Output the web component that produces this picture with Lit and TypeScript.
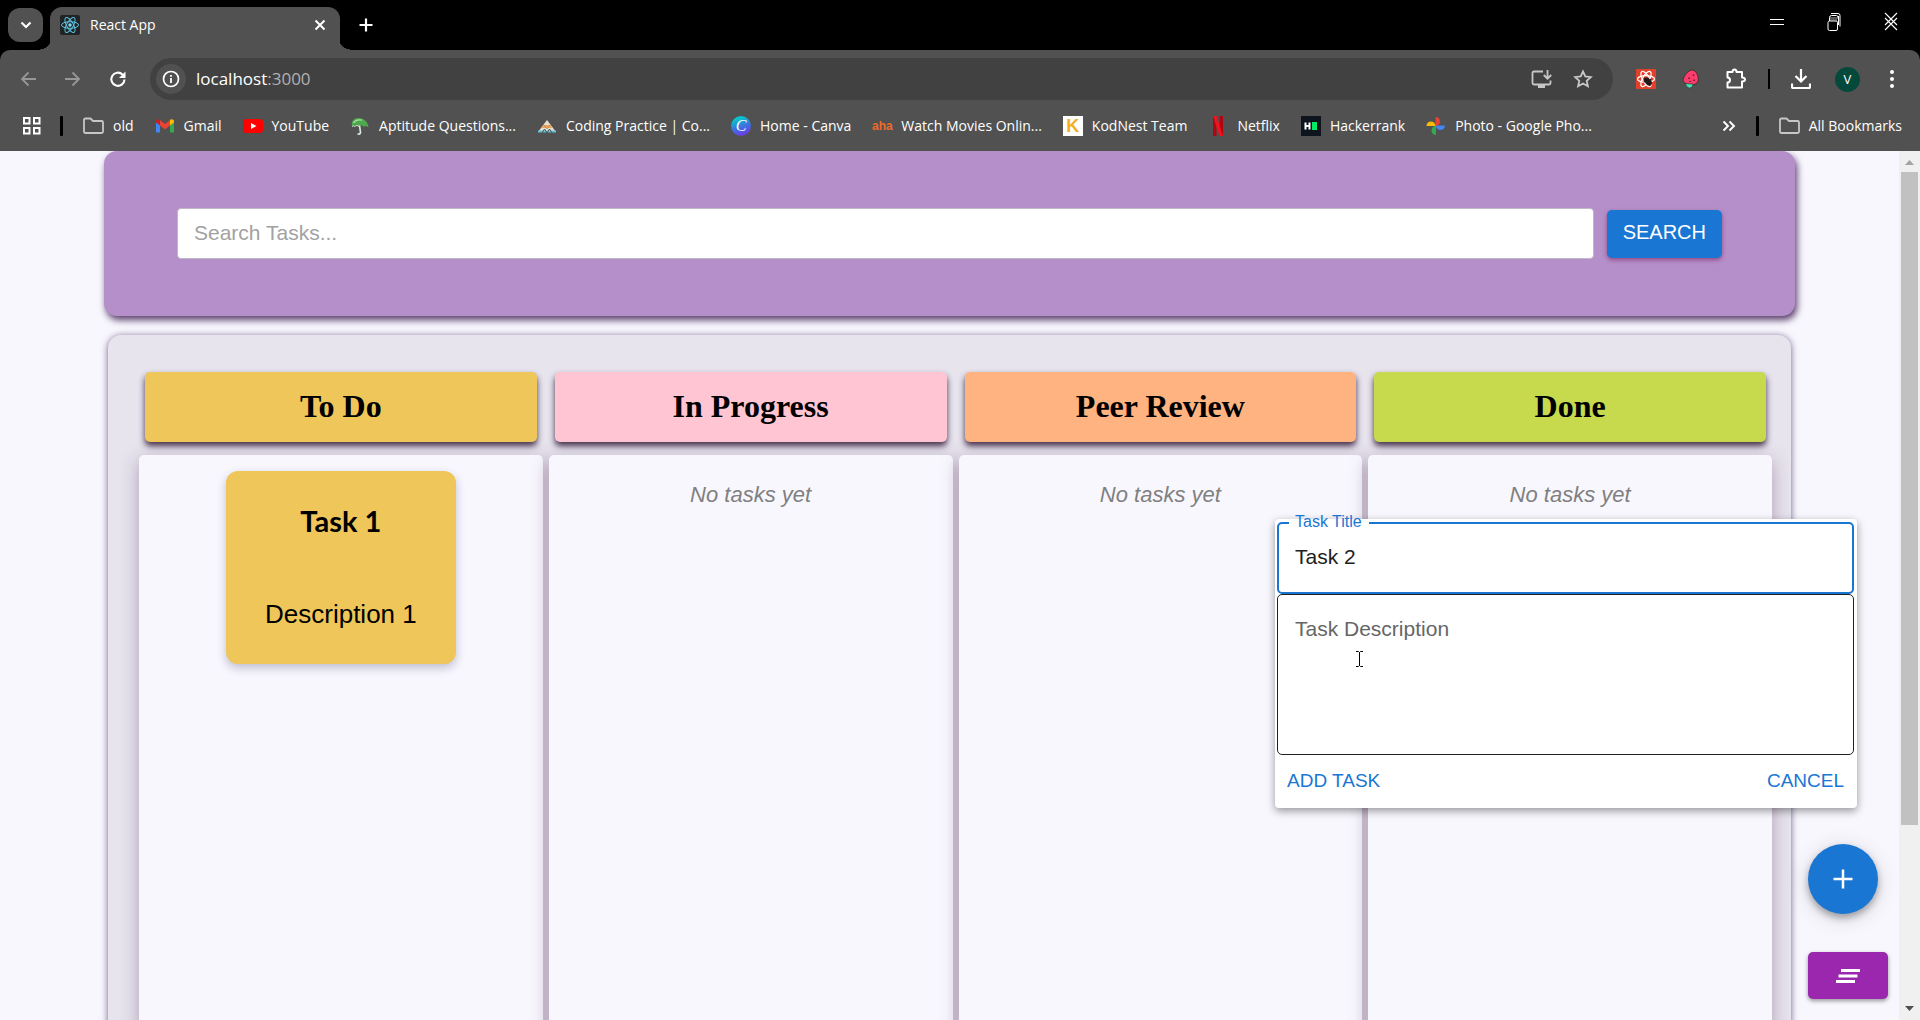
import { LitElement, html, css, svg, TemplateResult } from "lit";
import { customElement, property, state } from "lit/decorators.js";

const icon = (name: string, w: number, h: number, body: TemplateResult, box = `0 0 ${w} ${h}`) =>
  html`<svg class=${name} width=${w} height=${h} viewBox=${box} aria-hidden="true">${body}</svg>`;

const folderIcon = icon("ic", 21, 20, svg`<path d="M1 4q0-1.500 1.500-1.500h5l2.500 2.500h8.500q1.500 0 1.500 1.500v9q0 1.500-1.500 1.500h-16q-1.500 0-1.500-1.500z" fill="none" stroke="#c7c7c7" stroke-width="1.800"/>`);

const bookmarkIcons: Record<string, TemplateResult> = {
  folder: folderIcon,
  gmail: icon("ic", 20, 20, svg`
    <path d="M1 6v10.500h4V9z" fill="#4285f4"/><path d="M15 9v7.500h4V6z" fill="#34a853"/>
    <path d="M1 5.500C1 3.200 3.500 2.500 5 3.800V9.500L1 6.500z" fill="#c5221f"/>
    <path d="M5 4l5 4 5-4v5.500l-5 4-5-4z" fill="#ea4335"/>
    <path d="M15 3.800c1.500-1.300 4-.6 4 1.700v1l-4 3z" fill="#fbbc04"/>`),
  youtube: icon("ic", 20, 20, svg`<rect y="3" width="20" height="14" rx="3.500" fill="#f00"/><path d="M8 7l5.500 3L8 13z" fill="#fff"/>`),
  umbrella: icon("ic", 20, 20, svg`
    <path d="M2 10C1 5 4 2 8.500 2 13.500 2 18 5.500 18.500 11.500c-1.500-1.800-3-2-4.500-.8C12.500 9.500 10.500 9 9 10.300 7.500 8.300 5.500 8.500 4.500 10 3.500 9.300 2.800 9.400 2 10z" fill="#4fa84c"/>
    <path d="M3.500 7C5 4.500 8 3.300 12 4.200" fill="none" stroke="#a4e29f" stroke-width="1.300"/>
    <path d="M2 10.500q1.500-1.500 2.500 0 2.500-2.500 4.500 0" fill="none" stroke="#d5ecd3" stroke-width="1"/>
    <path d="M9.500 9.500l1 6.800q-.3 2.500-3 1.400" fill="none" stroke="#d9e6dc" stroke-width="1.700"/>`),
  ninjas: icon("ic", 20, 20, svg`
    <path d="M10 4l9 12H1z" fill="#e6e0cf"/><path d="M6.500 9h7l2 3H4.300z" fill="#f0a35a"/>
    <path d="M1 14.500h18v2H1z" fill="#63c3d8"/><path d="M5 17l2.500-4 2.500 4 2.500-4 2.500 4" stroke="#515151" stroke-width="1" fill="none"/>
    <path d="M7 9l3 4 3-4" stroke="#8a8071" stroke-width=".6" fill="none"/>`),
  canva: html`<span class="ic badge canva">C</span>`,
  aha: html`<span class="ic badge aha">aha</span>`,
  kod: html`<span class="ic badge kod">K</span>`,
  netflix: icon("ic", 20, 20, svg`<path d="M5 0h3.500v20H5z" fill="#b1060f"/><path d="M11.500 0H15v20h-3.500z" fill="#b1060f"/><path d="M5 0h3.500L15 20h-3.500z" fill="#f0121d"/>`),
  hacker: icon("ic", 20, 20, svg`<rect width="20" height="20" fill="#0e141e"/><path d="M4.500 6.500v7M8.500 6.500v7M4.500 10h4" stroke="#fff" stroke-width="2" fill="none"/><rect x="11" y="6" width="5" height="8" fill="#00ea64"/>`),
  photos: icon("ic", 20, 20, svg`
    <path d="M9.500 10V1a4.500 4.500 0 0 1 0 9z" fill="#ea4335"/><path d="M10 9.500h9a4.500 4.500 0 0 1-9 0z" fill="#4285f4"/>
    <path d="M10 10v9a4.500 4.500 0 0 1 0-9z" fill="#34a853"/><path d="M9.500 10h-9a4.500 4.500 0 0 1 9 0z" fill="#fbbc04"/>`),
};

const bookmarks = [
  ["folder", "old"],
  ["gmail", "Gmail"],
  ["youtube", "YouTube"],
  ["umbrella", "Aptitude Questions..."],
  ["ninjas", "Coding Practice | Co..."],
  ["canva", "Home - Canva"],
  ["aha", "Watch Movies Onlin..."],
  ["kod", "KodNest Team"],
  ["netflix", "Netflix"],
  ["hacker", "Hackerrank"],
  ["photos", "Photo - Google Pho..."],
];

@customElement("browser-chrome")
class BrowserChrome extends LitElement {
  static styles = css`
    :host { display: block; background: #000; color: #fff; font: 14px/20px "Open Sans", "Noto Sans", sans-serif; }
    * { box-sizing: border-box; }
    button { background: none; border: 0; padding: 0; margin: 0; color: inherit; font: inherit; display: flex; align-items: center; justify-content: center; }
    a { color: inherit; text-decoration: none; }
    svg { display: block; flex: none; }
    .strip { display: flex; height: 50px; padding: 7px 20px 0 8px; }
    .tab-search { width: 35px; height: 34px; margin: 1px 7px 0 0; border-radius: 12px; background: #515151; }
    .tab { position: relative; display: flex; align-items: center; width: 290px; height: 43px; padding: 0 12px 7px 10px; background: #515151; border-radius: 12px 12px 0 0; }
    .tab::before, .tab::after { content: ""; position: absolute; bottom: 0; width: 14px; height: 8px; }
    .tab::before { right: 100%; background: radial-gradient(ellipse 14px 8px at 0 0, transparent 98%, #515151 100%); }
    .tab::after { left: 100%; background: radial-gradient(ellipse 14px 8px at 100% 0, transparent 98%, #515151 100%); }
    .tab-title { flex: 1; padding-left: 10px; }
    .close { width: 16px; height: 20px; }
    .new { width: 20px; height: 36px; margin-left: 16px; }
    .controls { margin-left: auto; display: flex; gap: 39px; height: 30px; }
    .controls button { width: 18px; }
    .toolbar { display: flex; align-items: center; height: 50px; padding: 8px 22px 0 19px; background: #515151; border-radius: 10px 10px 0 0; }
    .nav { display: flex; gap: 27px; width: 131px; height: 42px; }
    .nav button { width: 18px; }
    .omni { flex: 1; display: flex; align-items: center; height: 42px; padding: 0 20px 0 6px; background: #414141; border-radius: 21px; }
    .info { width: 30px; height: 30px; border-radius: 15px; background: #515151; }
    .url { flex: 1; min-width: 0; padding: 0 10px; font-size: 17px; line-height: 24px; }
    .port { color: #b0b0b0; }
    .omni-tools { display: flex; gap: 20px; }
    .tools { display: flex; align-items: center; margin-left: 22px; }
    .tools button { width: 22px; height: 30px; margin-right: 23px; }
    .sep { width: 2px; height: 20px; margin: 0 20px 0 -2px; background: #000; }
    .tools .avatar { width: 25px; height: 25px; margin-right: 21px; border-radius: 50%; background: #04493c; font-size: 13px; }
    .tools .menu { width: 6px; margin: 0 3px 0 8px; }
    .marks { display: flex; align-items: center; height: 51px; padding: 0 18px 0 23px; background: #515151; }
    .marks .bar { width: 3px; height: 20px; background: #000; margin: 0 20px 0 19px; border-radius: 1px; }
    .links { flex: 1; display: flex; gap: 21px; min-width: 0; overflow: hidden; }
    .mark { display: flex; align-items: center; gap: 9px; white-space: nowrap; }
    .more { width: 16px; height: 20px; }
    .badge { display: flex; align-items: center; justify-content: center; width: 20px; height: 20px; }
    .canva { border-radius: 50%; background: linear-gradient(160deg, #08c3cc 20%, #3f6fe0 55%, #7d2ae8); font: italic 16px/20px "Liberation Serif", serif; }
    .aha { color: #f26a2a; font: bold 12px/20px "Liberation Sans", sans-serif; }
    .kod { background: #fff; color: #f2b01e; font: bold 18px/20px "Liberation Sans", sans-serif; }
  `;

  render() {
    return html`
      <div class="strip">
        <button class="tab-search" aria-label="Search tabs">${icon("i", 12, 8, svg`<path d="M1.500 1.500L6 6l4.500-4.500" fill="none" stroke="#fff" stroke-width="2.200"/>`)}</button>
        <div class="tab">
          ${icon("fav", 20, 20, svg`<rect width="20" height="20" rx="2" fill="#212427"/>
            <g fill="none" stroke="#5bc4e0" stroke-width="1"><ellipse cx="10" cy="10" rx="8.500" ry="3.300"/>
            <ellipse cx="10" cy="10" rx="8.500" ry="3.300" transform="rotate(60 10 10)"/>
            <ellipse cx="10" cy="10" rx="8.500" ry="3.300" transform="rotate(120 10 10)"/></g><circle cx="10" cy="10" r="1.700" fill="#7fdcf5"/>`)}
          <span class="tab-title">React App</span>
          <button class="close" aria-label="Close tab">${icon("i", 12, 12, svg`<path d="M1.500 1.500l9 9m0-9l-9 9" stroke="#fff" stroke-width="2"/>`)}</button>
        </div>
        <button class="new" aria-label="New tab">${icon("i", 14, 14, svg`<path d="M7 .5v13M.5 7h13" stroke="#fff" stroke-width="2.200"/>`)}</button>
        <div class="controls">
          <button aria-label="Minimize">${icon("i", 14, 14, svg`<path d="M0 4.500h14M0 9.500h14" stroke="#fff" stroke-width="1.200"/>`)}</button>
          <button aria-label="Restore">${icon("i", 14, 20, svg`<g fill="none" stroke="#fff"><path d="M4 1.500h7q2 0 2 2V14.500M11.500 4v9"/><path d="M2.500 9V5.500q0-2 2-2h5q1.500 0 1.500 2"/><rect x="1" y="9" width="9.500" height="9.500" rx="1.500"/><path d="M3 6h8M3 8h7" stroke="#aaa"/></g>`)}</button>
          <button aria-label="Close">${icon("i", 14, 20, svg`<path d="M1 1l12 12M13 1L1 13M1 6l12 12M13 6L1 18" stroke="#fff" stroke-width="1.100"/>`)}</button>
        </div>
      </div>
      <div class="toolbar">
        <div class="nav">
          <button aria-label="Back">${icon("i", 16, 16, svg`<path d="M8.500 1.500L2 8l6.500 6.500M2 8h14" fill="none" stroke="#979797" stroke-width="1.800"/>`)}</button>
          <button aria-label="Forward">${icon("i", 16, 16, svg`<path d="M7.500 1.500L14 8l-6.500 6.500M14 8H0" fill="none" stroke="#979797" stroke-width="1.800"/>`)}</button>
          <button aria-label="Reload">${icon("i", 18, 18, svg`<path d="M15.500 9.500A6.600 6.600 0 1 1 13.500 4.500L15.500 6.500" fill="none" stroke="#fff" stroke-width="2.100"/><path d="M16.500 1.500V8H10z" fill="#fff"/>`)}</button>
        </div>
        <div class="omni">
          <button class="info" aria-label="Site information">${icon("i", 18, 18, svg`<circle cx="9" cy="9" r="7.500" fill="none" stroke="#fff" stroke-width="1.700"/><path d="M9 8v5M9 5v1.800" stroke="#fff" stroke-width="1.800"/>`)}</button>
          <span class="url" role="textbox" aria-label="Address">localhost<span class="port">:3000</span></span>
          <div class="omni-tools">
            <button aria-label="Install app">${icon("i", 22, 20, svg`<g fill="none" stroke="#c7c7c7" stroke-width="1.800"><path d="M12 2.500H3Q1.500 2.500 1.500 4v10q0 1.500 1.500 1.500h15q1.500 0 1.500-1.500v-2.500"/><path d="M16.500 1v8.500M12.800 6l3.700 3.700L20.200 6"/></g><path d="M7 16h7v3H7z" fill="#c7c7c7"/>`)}</button>
            <button aria-label="Bookmark this tab">${icon("i", 20, 20, svg`<path d="M10 2.500l2.300 5 5.500.6-4.100 3.700 1.200 5.500L10 14.500l-4.900 2.800 1.200-5.500L2.200 8.100l5.500-.6z" fill="none" stroke="#c7c7c7" stroke-width="1.800"/>`)}</button>
          </div>
        </div>
        <div class="tools">
          <button aria-label="React Developer Tools">${icon("i", 20, 20, svg`<rect width="20" height="20" rx="1" fill="#e2402b"/>
            <g fill="none" stroke="#fff" stroke-width="1.200"><ellipse cx="10" cy="10" rx="8.500" ry="3.400"/><ellipse cx="10" cy="10" rx="8.500" ry="3.400" transform="rotate(60 10 10)"/><ellipse cx="10" cy="10" rx="8.500" ry="3.400" transform="rotate(120 10 10)"/></g>
            <ellipse cx="12" cy="12.500" rx="4.500" ry="3" transform="rotate(45 12 12.500)" fill="#24171a"/><path d="M9 8.500l-1 5M8 10.500l5-1M11 16l4-6M13.500 17l1.500-3" stroke="#24171a" stroke-width="1.200"/>`)}</button>
          <button aria-label="Strawberry extension">${icon("i", 18, 20, svg`<path d="M10.500 1C14 1.500 16.500 6.500 16.300 10.500 16 14.500 13 16 8.500 15.500 4 15.300.8 13.500 1.200 10.500 2 6.500 6.500.8 10.500 1z" fill="#fb3d6c" stroke="#2b2b2b" stroke-width=".8"/><path d="M7 8.500v1.500M11.500 5.500v1.500M12 10.500v1.500M8 12v1" stroke="#5a1730" stroke-width="1.400"/><path d="M3.500 14.500l4 .5 3.500 0-.5 2.500-3 1.700L4.500 17.500z" fill="#4fe0b0" stroke="#233" stroke-width=".6"/>`)}</button>
          <button aria-label="Extensions">${icon("i", 22, 22, svg`<path d="M2.500 4h5q0-2.500 2-2.500t2 2.500h5.500v5.500q3 0 3 2t-3 2v6H2.500v-5q2.500 0 2.500-2.500T2.500 9.500z" fill="none" stroke="#fff" stroke-width="2" stroke-linejoin="round"/>`)}</button>
          <span class="sep"></span>
          <button aria-label="Downloads">${icon("i", 20, 20, svg`<path d="M10 0v12M4.500 7l5.500 5.500L15.500 7M1 14.500v3.500q0 1 1 1h16q1 0 1-1v-3.500" fill="none" stroke="#fff" stroke-width="2.200"/>`)}</button>
          <button class="avatar" aria-label="Profile">V</button>
          <button class="menu" aria-label="Menu">${icon("i", 4, 18, svg`<g fill="#fff"><circle cx="2" cy="2" r="2"/><circle cx="2" cy="9" r="2"/><circle cx="2" cy="16" r="2"/></g>`)}</button>
        </div>
      </div>
      <nav class="marks" aria-label="Bookmarks">
        <button aria-label="Apps">${icon("i", 18, 18, svg`<g fill="none" stroke="#fff" stroke-width="2"><rect x="1" y="1" width="5.500" height="5.500"/><rect x="11" y="1" width="5.500" height="5.500"/><rect x="1" y="11" width="5.500" height="5.500"/><rect x="11" y="11" width="5.500" height="5.500"/></g>`)}</button>
        <span class="bar"></span>
        <div class="links">
          ${bookmarks.map(([kind, text]) => html`<a class="mark" href="#">${bookmarkIcons[kind]}<span>${text}</span></a>`)}
        </div>
        <button class="more" aria-label="More bookmarks">${icon("i", 14, 12, svg`<path d="M1.500 1.500L6 6l-4.500 4.500M7.500 1.500L12 6l-4.500 4.500" fill="none" stroke="#fff" stroke-width="1.900"/>`)}</button>
        <span class="bar"></span>
        <a class="mark" href="#">${folderIcon}<span>All Bookmarks</span></a>
      </nav>
    `;
  }
}

interface Task { title: string; description: string; }
interface Lane { name: string; tone: string; tasks: Task[]; }

@customElement("task-lane")
class TaskLane extends LitElement {
  @property({ attribute: false }) lane!: Lane;

  static styles = css`
    :host { display: flex; flex-direction: column; gap: 13px; min-width: 0; font-family: "Liberation Sans", Arial, sans-serif; }
    .head { margin: 0 6px; height: 70px; border-radius: 5px; text-align: center; color: #000; font: bold 32px/68px "Liberation Serif", "Times New Roman", serif; box-shadow: 0 4px 6px rgba(40, 15, 45, 0.85); }
    .amber { background: #eec659; }
    .pink { background: #ffc5d3; }
    .orange { background: #ffb380; }
    .lime { background: #c7d94d; }
    .body { flex: 1; display: flex; flex-direction: column; align-items: center; padding: 16px; background: #f8f7fe; border-radius: 5px; box-shadow: 0 5px 18px rgba(110, 75, 110, 0.45); }
    .empty { margin: 8px 0 0; font-size: 22px; line-height: 32px; font-style: italic; color: #808080; }
    .card { display: flex; flex-direction: column; gap: 57px; box-sizing: border-box; padding: 32px 39px; height: 193px; border-radius: 12px; text-align: center; color: #000; box-shadow: 0 4px 10px rgba(60, 60, 100, 0.3); }
    h3 { margin: 0; font: bold 29px/36px "Comic Sans MS", Lato, "Open Sans", sans-serif; }
    p { margin: 0; font-size: 26px; line-height: 36px; }
  `;

  render() {
    const { name, tone, tasks } = this.lane;
    return html`
      <h2 class="head ${tone}">${name}</h2>
      <section class="body" aria-label=${name}>
        ${tasks.length
          ? tasks.map((t) => html`<article class="card ${tone}"><h3>${t.title}</h3><p>${t.description}</p></article>`)
          : html`<p class="empty">No tasks yet</p>`}
      </section>
    `;
  }
}

@customElement("task-form")
class TaskForm extends LitElement {
  static styles = css`
    :host { display: block; box-sizing: border-box; padding: 3px 3px 0 2px; background: #fff; border-radius: 4px; box-shadow: 0 3px 8px rgba(0, 0, 0, 0.4); font-family: "Liberation Sans", Arial, sans-serif; }
    * { box-sizing: border-box; }
    .field { position: relative; display: flex; }
    input, textarea { width: 100%; margin: 0; padding: 0 16px; border-radius: 5px; background: #fff; outline: 0; resize: none; color: #212121; font: 21px/30px "Liberation Sans", Arial, sans-serif; }
    input { height: 72px; border: 2px solid #1976d2; padding-bottom: 3px; }
    textarea { display: block; height: 161px; padding-top: 19px; border: 1px solid #212121; }
    label { position: absolute; }
    .floating { left: 12px; top: -10px; padding: 0 7px 0 6px; font-size: 16px; line-height: 20px; color: #1976d2; background: linear-gradient(#fff, #fff) no-repeat 0 10px / 100% 2px; }
    .resting { left: 18px; top: 20px; font-size: 21px; line-height: 30px; color: #666; }
    .pointer { position: absolute; left: 78px; top: 57px; }
    .actions { display: flex; justify-content: space-between; padding: 9px 0 11px; }
    button { height: 33px; padding: 0 10px; border: 0; background: none; color: #1976d2; text-transform: uppercase; font: 19px/33px "Liberation Sans", Arial, sans-serif; }
  `;

  render() {
    return html`
      <div class="field">
        <input id="title" type="text" value="Task 2" />
        <label class="floating" for="title">Task Title</label>
      </div>
      <div class="field">
        <textarea id="description"></textarea>
        <label class="resting" for="description">Task Description</label>
        <svg class="pointer" width="9" height="16" viewBox="0 0 9 16" aria-hidden="true"><path d="M1 .5h2.500l1 1 1-1H8M4.500 1v14M1 15.500h2.500l1-1 1 1H8" fill="none" stroke="#000"/></svg>
      </div>
      <div class="actions">
        <button type="button">Add Task</button>
        <button type="button">Cancel</button>
      </div>
    `;
  }
}

@customElement("app-root")
class AppRoot extends LitElement {
  @state() private lanes: Lane[] = [
    { name: "To Do", tone: "amber", tasks: [{ title: "Task 1", description: "Description 1" }] },
    { name: "In Progress", tone: "pink", tasks: [] },
    { name: "Peer Review", tone: "orange", tasks: [] },
    { name: "Done", tone: "lime", tasks: [] },
  ];

  static styles = css`
    :host { display: flex; flex-direction: column; height: 100vh; overflow: hidden; font-family: "Liberation Sans", Arial, sans-serif; }
    * { box-sizing: border-box; }
    .view { flex: 1; min-height: 0; display: flex; background: #f8f7fe; }
    .page { position: relative; flex: 1; min-width: 0; display: flex; flex-direction: column; gap: 19px; overflow: hidden; }
    .search { display: flex; align-items: center; gap: 13px; margin: 0 104px; padding: 57px 73px; border-radius: 13px; background: #b48fc9; box-shadow: 2px 4px 7px rgba(50, 15, 70, 0.8); }
    .search input { flex: 1; min-width: 0; height: 51px; padding: 0 16px 2px; border: 1px solid #c0b8c6; border-radius: 4px; background: #fff; outline: 0; font: 21px/30px "Liberation Sans", Arial, sans-serif; }
    .search input::placeholder { color: #a2a2a2; opacity: 1; }
    button { border: 0; color: #fff; }
    .search button { height: 48px; padding: 0 16px 4px; border-radius: 5px; background: #1976d2; text-transform: uppercase; font: 20px/44px "Liberation Sans", Arial, sans-serif; box-shadow: 0 2px 4px rgba(120, 20, 80, 0.55); }
    .board { flex: 1; display: grid; grid-template-columns: repeat(4, minmax(0, 1fr)); gap: 6px; margin: 0 108px -60px; padding: 37px 19px 0 31px; border-radius: 13px; background: #e7e4ee; box-shadow: 0 1px 7px rgba(60, 30, 85, 0.7); }
    .form { position: absolute; right: 42px; bottom: 212px; width: 582px; }
    .add, .clear { position: absolute; display: flex; align-items: center; justify-content: center; padding: 0; }
    .add { right: 21px; bottom: 106px; width: 70px; height: 70px; border-radius: 50%; background: #1976d2; box-shadow: 0 4px 7px rgba(0, 0, 0, 0.3), 0 4px 22px rgba(0, 0, 0, 0.15); }
    .clear { right: 11px; bottom: 21px; width: 80px; height: 47px; border-radius: 5px; background: #9b27af; box-shadow: 0 2px 4px rgba(0, 0, 0, 0.4); }
    .scroll { flex: none; width: 21px; display: flex; flex-direction: column; align-items: center; padding: 9px 0 9px; background: #f0f0f0; }
    .track { flex: 1; display: flex; margin: 7px 0; }
    .thumb { width: 17px; height: 79%; background: #c1c1c1; }
  `;

  render() {
    return html`
      <browser-chrome></browser-chrome>
      <div class="view">
        <main class="page">
          <form class="search" role="search">
            <input type="search" aria-label="Search Tasks" placeholder="Search Tasks..." />
            <button type="button">Search</button>
          </form>
          <div class="board">${this.lanes.map((lane) => html`<task-lane .lane=${lane}></task-lane>`)}</div>
          <task-form class="form" role="dialog" aria-label="New task"></task-form>
          <button class="add" type="button" aria-label="Add task">
            <svg width="20" height="20" viewBox="0 0 20 20"><path d="M10 .5v19M.5 10h19" stroke="#fff" stroke-width="2.500"/></svg>
          </button>
          <button class="clear" type="button" aria-label="Clear all">
            <svg width="24" height="14" viewBox="0 0 24 14"><path d="M5 1.500h19M2.500 7h19M0 12.500h19" stroke="#fff" stroke-width="2.800"/></svg>
          </button>
        </main>
        <div class="scroll" aria-hidden="true">
          <svg width="9" height="5" viewBox="0 0 9 5"><path d="M0 5l4.500-5L9 5z" fill="#a3a3a3"/></svg>
          <div class="track"><div class="thumb"></div></div>
          <svg width="9" height="5" viewBox="0 0 9 5"><path d="M0 0h9L4.500 5z" fill="#505050"/></svg>
        </div>
      </div>
    `;
  }
}
